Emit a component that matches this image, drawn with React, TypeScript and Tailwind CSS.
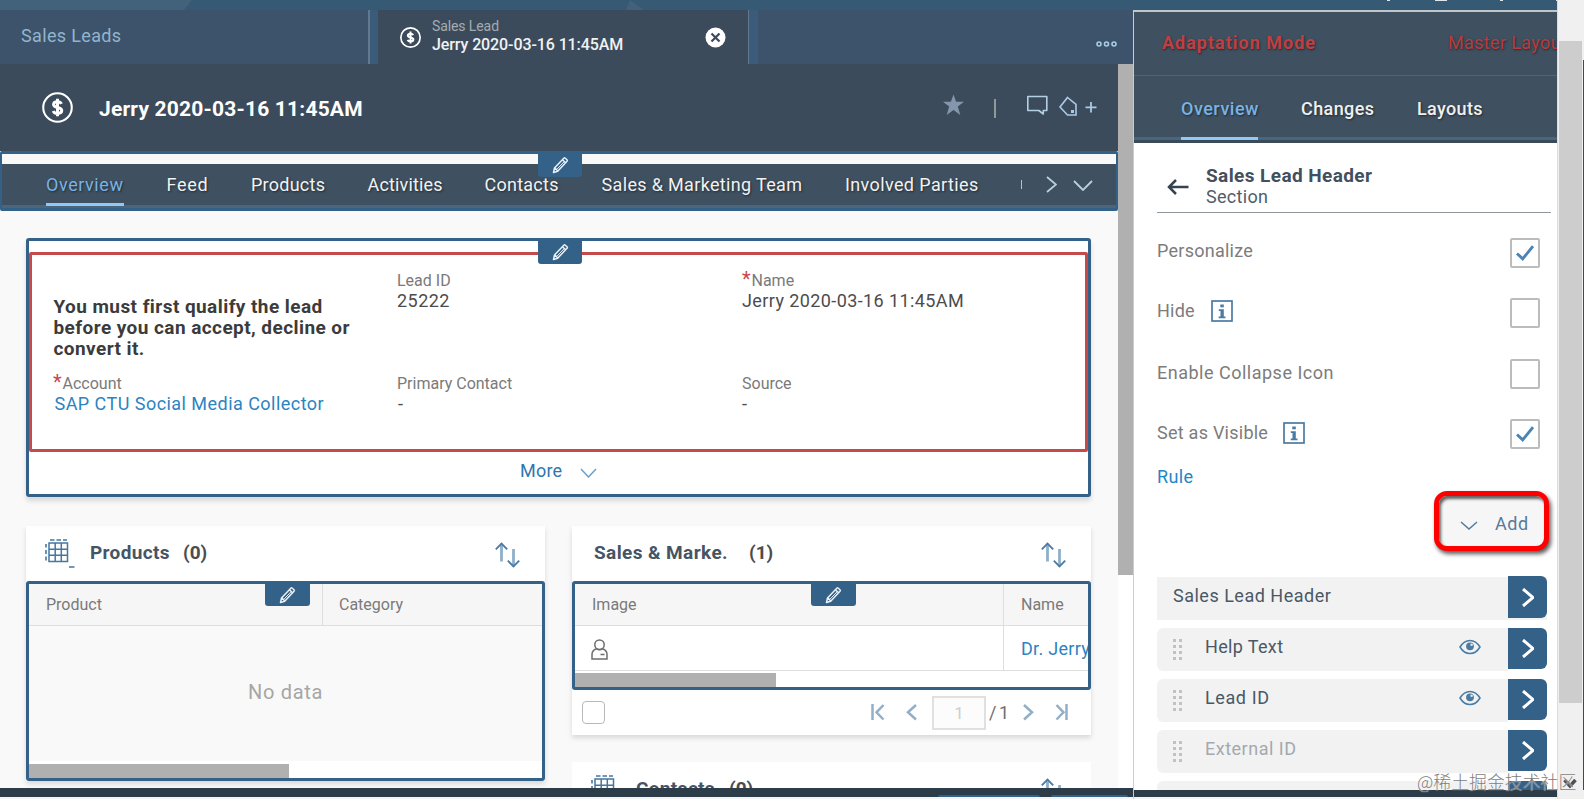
import React from 'react';

const navTabs = [
  { label: 'Overview', className: 'w-[78px] tracking-[0.57px]', active: true },
  { label: 'Feed', className: 'w-[42px] tracking-[0.7px]' },
  { label: 'Products', className: 'w-[74px] tracking-[0.25px]' },
  { label: 'Activities', className: 'w-[74.500px] tracking-[0.15px]' },
  { label: 'Contacts', className: 'w-[74.500px] tracking-[0.25px]' },
  { label: 'Sales & Marketing Team', className: 'w-[201px] tracking-[0.34px]' },
  { label: 'Involved Parties', className: 'w-[134px] tracking-[0.38px]' },
];

const panelRows = [
  { label: 'Help Text', className: 'tracking-[0.35px]', visible: true },
  { label: 'Lead ID', className: 'tracking-[0.6px]', visible: true },
  { label: 'External ID', className: 'tracking-[0.5px] text-[#a3a9af]', visible: false },
];

const DollarIcon = ({ size, stroke }: { size: number; stroke: number }) => (
  <svg width={size} height={size} viewBox="0 0 30 30" fill="none" stroke="#fff" className="shrink-0">
    <circle cx="15" cy="15" r="13.8" strokeWidth={stroke} />
    <path d="M18.8 11.6c-.7-1.5-2-2.1-3.8-2.1-2.2 0-3.8 1-3.8 2.7 0 4 7.9 1.7 7.9 5.8 0 1.800-1.700 2.800-4 2.800-2.100 0-3.600-.8-4.200-2.500M15 6.500v17" strokeWidth="2.900" />
  </svg>
);

const PencilTab = ({ className }: { className: string }) => (
  <div className={`absolute flex items-center justify-center bg-[#346187] rounded-b-[3px] ${className}`}>
    <svg width="17" height="18" viewBox="0 0 17 18" fill="none" stroke="#e8f1f8" strokeWidth="1.500" strokeLinejoin="round">
      <path d="M1.500 16.500l1-4.500L11.800 2.200c.5-.5 1-.5 1.500 0l1.700 1.600c.5.5.5 1 0 1.500L5.700 15.200zM3 12l2.700 3M10.500 3.700l3 3" />
      <path d="M5 13.200l7-7.400" strokeWidth="1" />
    </svg>
  </div>
);

const SortIcon = () => (
  <svg width="25" height="26" viewBox="0 0 25 26" fill="none" stroke="#4f7ca3" strokeWidth="1.900">
    <path d="M6.500 19.500V1.500" stroke="#8fafc9" strokeWidth="2.800" />
    <path d="M.8 7.300L6.500 1.500l5.700 5.800" />
    <path d="M18.500 7v17.500" stroke="#8fafc9" strokeWidth="2.800" />
    <path d="M12.800 18.700l5.700 5.800 5.700-5.800" />
  </svg>
);

const TableIcon = () => (
  <svg width="30" height="29" viewBox="0 0 30 29" fill="none" stroke="#4577a0" strokeWidth="1.500">
    <path d="M4 4h18.500v18.500H4zM10.200 4v18.500M16.300 4v18.500M4 10.200h18.500M4 16.300h18.500" />
    <path d="M5 1h4.500M11.500 1H16M18 1h4M1 5v3.500M1 11v4M1 17.500v4M24 28h5.500" strokeWidth="1.600" />
  </svg>
);

const Chevron = ({ dir, color, w = 18, h = 10, stroke = 1.5 }: { dir: 'down' | 'right'; color: string; w?: number; h?: number; stroke?: number }) => {
  const points = {
    down: `1,1 ${w / 2},${h - 1} ${w - 1},1`,
    right: `1,1 ${w - 1},${h / 2} 1,${h - 1}`,
  };
  return (
    <svg width={w} height={h} fill="none" stroke={color} strokeWidth={stroke} className="shrink-0">
      <polyline points={points[dir]} />
    </svg>
  );
};

const InfoIcon = () => (
  <svg width="22" height="22" viewBox="0 0 22 22" className="shrink-0">
    <rect x="1" y="1" width="20" height="20" fill="#fff" stroke="#4a7ba3" strokeWidth="1.700" />
    <rect x="9.300" y="4.500" width="3.500" height="2.800" fill="#4a7ba3" />
    <path d="M7.800 9.300h5v7.200h1.700v1.700H7.700v-1.700h1.800v-5.600H7.800z" fill="#4a7ba3" />
  </svg>
);

const Checkbox = ({ checked }: { checked?: boolean }) => (
  <div className="flex h-[30px] w-[30px] shrink-0 items-center justify-center rounded-[2px] border-2 border-[#bcbcbc] bg-white">
    {checked && (
      <svg width="18" height="16" viewBox="0 0 18 16" fill="none" stroke="#4a83b4" strokeWidth="2.900">
        <path d="M1 8.500l5.700 5.300L17 1.200" />
      </svg>
    )}
  </div>
);

const EyeIcon = () => (
  <svg width="22" height="16" viewBox="0 0 22 16" fill="none" stroke="#4a7ba3" strokeWidth="1.500">
    <path d="M1 8c2.600-4.300 6-6.600 10-6.600S18.400 3.700 21 8c-2.600 4.300-6 6.600-10 6.600S3.600 12.300 1 8z" />
    <circle cx="11" cy="7.300" r="3.900" fill="#4a7ba3" stroke="none" />
    <circle cx="12.600" cy="5.800" r="1.300" fill="#dbe6ef" stroke="none" />
  </svg>
);

const DragHandle = () => (
  <div className="grid w-[9px] grid-cols-2 gap-[3px]">
    {Array.from({ length: 8 }, (_, i) => (
      <span key={i} className="h-[3px] w-[3px] bg-[#c2c2c2]" />
    ))}
  </div>
);

const OpenButton = ({ className = 'h-[41px]' }: { className?: string }) => (
  <div className={`flex w-[39px] shrink-0 items-center justify-center rounded-r-md bg-[#346187] ${className}`}>
    <Chevron dir="right" color="#fff" w={12} h={19} stroke={3} />
  </div>
);

interface FieldProps {
  label: string;
  value: string;
  required?: boolean;
  link?: boolean;
  valueTrack?: string;
}

const Field = ({ label, value, required, link, valueTrack = '' }: FieldProps) => (
  <div className="flex flex-col whitespace-nowrap">
    <div className="flex h-[19px] text-[16px] leading-[20px] text-[#7a7a7a]">
      {required && <span className="-mt-[2px] mr-[1.500px] h-4 w-2 text-[20px] leading-[20px] text-[#c8474c]">*</span>}
      {label}
    </div>
    <div className={`mt-px h-[20px] text-[18px] leading-[20px] ${link ? 'text-[#2c83c1]' : 'text-[#4c4c4c]'} ${valueTrack}`}>{value}</div>
  </div>
);

const TopTabs = () => (
  <div className="flex h-[54px] shrink-0 bg-[#3b5b7a]">
    <div className="w-[370px] border-r-2 border-[#61788e] bg-[#3c536b] pl-[21px] pt-[15px] text-[18px] leading-[22px] tracking-[0.35px] text-[#93b4ce]">
      Sales Leads
    </div>
    <div className="ml-2 flex w-[371px] border-r border-[#61788e] bg-[#3c4b5b] pl-[22px]">
      <div className="pt-[17px]">
        <DollarIcon size={21} stroke={2.4} />
      </div>
      <div className="ml-[11px] w-[273px] whitespace-nowrap pt-[7px]">
        <div className="text-[14px] leading-[18px] tracking-[-0.1px] text-[#a4abb0]">Sales Lead</div>
        <div className="text-[16px] font-medium leading-[20px] tracking-[-0.1px] text-[#f0f2f4]">Jerry 2020-03-16 11:45AM</div>
      </div>
      <svg width="21" height="21" viewBox="0 0 21 21" className="mt-[17px]">
        <circle cx="10.500" cy="10.500" r="10" fill="#fff" />
        <path d="M6.500 6.500l8 8M14.500 6.500l-8 8" stroke="#3c4b5b" strokeWidth="2.200" />
      </svg>
    </div>
    <div className="ml-[9px] flex flex-1 justify-end bg-[#3c536b] pr-4 pt-[31px]">
      <svg width="21" height="6" fill="none" stroke="#a9cbe6" strokeWidth="1.600">
        <circle cx="3" cy="3" r="2" />
        <circle cx="10.500" cy="3" r="2" />
        <circle cx="18" cy="3" r="2" />
      </svg>
    </div>
  </div>
);

const ObjectHeader = () => (
  <div className="flex h-[87px] shrink-0 bg-[#3c4b5b] pl-[42px]">
    <div className="pt-7">
      <DollarIcon size={31} stroke={2} />
    </div>
    <h1 className="ml-[26px] w-[844px] pt-[33px] text-[21px] font-bold leading-6 tracking-[0.19px] text-white">Jerry 2020-03-16 11:45AM</h1>
    <svg width="160" height="26" viewBox="0 0 160 26" fill="none" stroke="#a9cbe6" strokeWidth="1.600" className="mt-[30px]">
      <path d="M10.500 .5l2.600 7.300h7.900l-6.200 4.700 2.500 8.500-6.800-5-6.800 5 2.500-8.500L0 7.800h7.900z" fill="#8396ab" stroke="none" />
      <path d="M52 5v19" stroke="#8f9a90" strokeWidth="2" />
      <path d="M84.800 2.500h19v14h-3.500v3.500l-4.500-3.500h-11z" stroke="#b4cfe4" strokeLinejoin="round" />
      <path d="M124.500 3.500l8.500 7v10.500h-8.500l-7.500-8z" />
      <rect x="128" y="16" width="3" height="3" fill="#a9cbe6" stroke="none" />
      <path d="M142.500 13.300h11M148 8v10.500" strokeWidth="1.800" />
    </svg>
  </div>
);

const ObjectNav = () => (
  <div className="relative flex h-[60px] shrink-0 flex-col rounded-[2px] border-x-2 border-y-3 border-[#346187] bg-[#3f5060]">
    <div className="h-[10px] bg-[#f9f9f9]" />
    <div className="flex h-[44px] justify-between border-b-3 border-[#4b667c] pl-11">
      <div className="flex gap-[42.500px]">
        {navTabs.map((tab) => (
          <div key={tab.label} className={`relative h-[41px] whitespace-nowrap pt-[10px] text-[18px] leading-[22px] [text-shadow:1px_1px_2px_#222c36] ${tab.className} ${tab.active ? 'text-[#78b3e2]' : 'text-[#f2f2f2]'}`}>
            {tab.label}
            {tab.active && <div className="absolute inset-x-0 -bottom-[1px] h-[3px] bg-[#91c8f6]" />}
          </div>
        ))}
      </div>
      <div className="flex pr-[23px]">
        <div className="mt-4 h-[9px] w-px bg-[#9fc7ea]" />
        <div className="ml-6 mt-3">
          <Chevron dir="right" color="#b9cfdf" w={11} h={17} stroke={1.8} />
        </div>
        <div className="ml-[16px] mt-4">
          <Chevron dir="down" color="#b9cfdf" w={20} h={11} stroke={1.8} />
        </div>
      </div>
    </div>
    <PencilTab className="-top-[2px] left-[536px] h-[25px] w-[44px]" />
  </div>
);

const LeadSection = () => (
  <div className="relative h-[259px] shrink-0 rounded-[3px] border-3 border-[#346187] bg-white pt-[11px] shadow-[0_4px_5px_rgba(0,0,0,0.13)]">
    <div className="grid h-[200px] grid-cols-[344px_345px_1fr] grid-rows-[103px_1fr] rounded-[2px] border-3 border-[#c44a4b] pl-[21px] pt-[16px]">
      <p className="whitespace-nowrap pl-[0.500px] pt-[25px] text-[19px] font-bold leading-[21px] tracking-[0.43px] text-[#3b3b3b]">
        You must first qualify the lead
        <br />
        before you can accept, decline or
        <br />
        convert it.
      </p>
      <Field label="Lead ID" value="25222" valueTrack="tracking-[0.45px]" />
      <Field label="Name" value="Jerry 2020-03-16 11:45AM" required valueTrack="tracking-[0.4px]" />
      <Field label="Account" value="SAP CTU Social Media Collector" required link valueTrack="pl-[1.500px] tracking-[0.46px]" />
      <Field label="Primary Contact" value="-" valueTrack="pl-px" />
      <Field label="Source" value="-" />
    </div>
    <div className="flex pl-[491px] pt-[8px] text-[18px] leading-[22px] tracking-[0.2px] text-[#2f77ad]">
      More
      <div className="ml-[18px] mt-[8px]">
        <Chevron dir="down" color="#6b9fc8" w={17} h={10} />
      </div>
    </div>
    <PencilTab className="-top-[1px] left-[509px] h-[24px] w-[44px]" />
  </div>
);

const ProductsCard = () => (
  <div className="h-[255px] w-[519px] bg-white shadow-[0_3px_5px_rgba(0,0,0,0.13)]">
    <div className="flex h-[55px] pl-[19px] text-[19px] font-bold leading-6 text-[#465463]">
      <div className="pt-[13px]">
        <TableIcon />
      </div>
      <div className="ml-[15px] w-[93px] pt-[15px] tracking-[0.35px]">Products</div>
      <div className="w-[312px] pt-[15px] text-[#4c4c4c]">(0)</div>
      <div className="pt-4">
        <SortIcon />
      </div>
    </div>
    <div className="relative flex h-[200px] flex-col rounded-[3px] border-3 border-[#346187] bg-[#f9f9f9]">
      <div className="flex h-[42px] border-b border-[#dedede] bg-[#f6f6f6] text-[16px] leading-5 text-[#7a7a7a]">
        <div className="w-[294px] border-r border-[#dedede] pl-[17px] pt-[11px]">Product</div>
        <div className="pl-4 pt-[11px]">Category</div>
      </div>
      <div className="flex h-[135px] items-center justify-center pb-1 text-[20px] tracking-[0.7px] text-[#a6a6a6]">No data</div>
      <div className="flex flex-1 items-end bg-white">
        <div className="h-[14px] w-[260px] bg-[#b0b0b0]" />
      </div>
      <PencilTab className="-top-[1px] left-[236px] h-[23px] w-[45px]" />
    </div>
  </div>
);

const TeamCard = () => (
  <div className="h-[209px] w-[519px] bg-white shadow-[0_3px_5px_rgba(0,0,0,0.13)]">
    <div className="flex h-[55px] pl-[22px] text-[19px] font-bold leading-6 text-[#465463]">
      <div className="w-[155px] whitespace-nowrap pt-[15px] tracking-[0.4px]">Sales &amp; Marke.</div>
      <div className="w-[292px] pt-[15px] text-[#4c4c4c]">(1)</div>
      <div className="pt-4">
        <SortIcon />
      </div>
    </div>
    <div className="relative flex h-[109px] flex-col rounded-[3px] border-3 border-[#346187] bg-white">
      <div className="flex h-[42px] border-b border-[#dedede] bg-[#f6f6f6] text-[16px] leading-5 text-[#7a7a7a]">
        <div className="w-[429px] border-r border-[#dedede] pl-[17px] pt-[11px]">Image</div>
        <div className="pl-[17px] pt-[11px]">Name</div>
      </div>
      <div className="flex h-[45px] border-b border-[#dedede]">
        <div className="w-[429px] border-r border-[#dedede] pl-[16px] pt-[13px]">
          <svg width="17" height="21" viewBox="0 0 17 21" fill="none" stroke="#6d6d6d" strokeWidth="1.500">
            <circle cx="8.500" cy="5.700" r="4.700" />
            <path d="M1 20v-4.500c0-3 1.500-4.700 4.500-5.700 2 1.200 4 1.200 6 0 3 1 4.500 2.700 4.500 5.700V20zM9.500 15.500h4" />
          </svg>
        </div>
        <div className="flex-1 overflow-hidden whitespace-nowrap pl-[17px] pt-[12px] text-[18px] leading-[22px] tracking-[0.3px] text-[#2c83c1]">Dr. Jerry</div>
      </div>
      <div className="flex flex-1 items-end">
        <div className="h-[14px] w-[201px] bg-[#b0b0b0]" />
      </div>
      <PencilTab className="-top-[1px] left-[236px] h-[23px] w-[45px]" />
    </div>
    <div className="flex h-[45px] items-center pl-[10px]">
      <div className="h-[23px] w-[23px] rounded-[4px] border-[1.500px] border-[#b9b9b9] bg-white" />
      <svg width="46" height="17" viewBox="0 0 46 17" fill="none" stroke="#93afc8" strokeWidth="2.500" className="ml-[266px]">
        <path d="M1.500 0v16M12.500 1L5.500 8.300l7 7.200M45 1l-8 7.300 8 7.200" />
      </svg>
      <div className="ml-[15px] flex h-[34px] w-[54px] items-center justify-center border-2 border-[#e0e0e0] bg-[#fcfcfc] pt-0.5 text-[17px] text-[#cfcfcf]">1</div>
      <div className="ml-[3px] w-[19px] whitespace-nowrap text-[18px] tracking-[-0.9px] text-[#6e6e6e]">/ 1</div>
      <svg width="46" height="17" viewBox="0 0 46 17" fill="none" stroke="#93afc8" strokeWidth="2.500" className="ml-[15px]">
        <path d="M1 1l8 7.300-8 7.200M33.500 1l7 7.300-7 7.200M43.500 0v16" />
      </svg>
    </div>
  </div>
);

const ContactsCard = () => (
  <div className="flex h-[55px] w-[519px] bg-white pl-[19px] text-[19px] font-bold leading-6 text-[#465463]">
    <div className="pt-[13px]">
      <TableIcon />
    </div>
    <div className="ml-[15px] w-[93px] pt-[15px] tracking-[0.3px]">Contacts</div>
    <div className="w-[312px] pt-[15px] text-[#4c4c4c]">(0)</div>
    <div className="pt-4">
      <SortIcon />
    </div>
  </div>
);

const AdaptationPanel = () => (
  <div className="flex w-[424px] shrink-0 flex-col overflow-hidden border-l border-[#c9cccf] bg-white">
    <div className="flex h-[65px] shrink-0 overflow-hidden whitespace-nowrap border-t-2 border-[#bfc5c9] bg-[#3f5060] pl-[28px] pt-[20px] text-[18px] leading-[22px]">
      <div className="w-[286px] shrink-0 font-bold tracking-[1px] text-[#c13f41] [text-shadow:1px_1px_2px_#222c36]">Adaptation Mode</div>
      <div className="tracking-[0.35px] text-[#b83c3e] [text-shadow:1px_1px_2px_#222c36]">Master Layout</div>
    </div>
    <div className="flex h-[68px] shrink-0 flex-col border-b-3 border-[#3b4a59] bg-[#3f5060]">
      <div className="flex h-[65px] border-b-3 border-t border-[#4b667c] pl-[47px] text-[18px] font-medium leading-[22px] text-[#f0f0f0] [text-shadow:1px_1px_2px_#222c36]">
        <div className="relative w-[77px] pt-[22px] tracking-[0.5px] text-[#78b3e2]">
          Overview
          <div className="absolute inset-x-0 -bottom-[3px] h-[3px] bg-[#91c8f6]" />
        </div>
        <div className="ml-[43px] w-[73px] pt-[22px] tracking-[0.4px]">Changes</div>
        <div className="ml-[43px] pt-[22px] tracking-[0.35px]">Layouts</div>
      </div>
    </div>

    <div className="flex flex-1 flex-col overflow-hidden pl-[23px]">
      <div className="flex h-[70px] w-[394px] shrink-0 border-b border-[#8f989f] pl-[10px] pt-[22px] text-[18px] leading-[21px]">
        <svg width="22" height="16" viewBox="0 0 22 16" fill="none" stroke="#36434f" strokeWidth="2.500" className="mt-[14px]">
          <path d="M21.500 8H2M9 1L2 8l7 7" />
        </svg>
        <div className="ml-[17px] text-[#4f5d6b]">
          <div className="text-[19px] font-bold tracking-[0.4px] text-[#414f5e]">Sales Lead Header</div>
          <div className="tracking-[0.3px]">Section</div>
        </div>
      </div>

      <div className="flex w-[383px] shrink-0 flex-col text-[18px] leading-[22px] text-[#7c7c7c]">
        <div className="mt-[25px] flex h-[30px] justify-between">
          <span className="pt-[2px] tracking-[0.25px]">Personalize</span>
          <Checkbox checked />
        </div>
        <div className="mt-[30px] flex h-[30px] justify-between">
          <div className="flex gap-4 pt-[2px] tracking-[0.25px]">
            Hide
            <InfoIcon />
          </div>
          <Checkbox />
        </div>
        <div className="mt-[31px] flex h-[30px] justify-between">
          <span className="pt-[3px] tracking-[0.5px]">Enable Collapse Icon</span>
          <Checkbox />
        </div>
        <div className="mt-[30px] flex h-[30px] justify-between">
          <div className="flex gap-[15px] pt-[3px] tracking-[0.25px]">
            Set as Visible
            <InfoIcon />
          </div>
          <Checkbox checked />
        </div>
        <div className="mt-[17px] tracking-[0.4px] text-[#2287c6]">Rule</div>
      </div>

      <div className="ml-[277px] mt-[3px] flex h-[60px] w-[115px] shrink-0 items-center rounded-[13px] border-5 border-[#ff0000] bg-[#f6f6f6] pl-[21px] text-[18px] text-[#557a9c] shadow-[2px_3px_4px_rgba(0,0,0,0.65),inset_2px_3px_3px_rgba(0,0,0,0.6)]">
        <div className="mt-2">
          <Chevron dir="down" color="#557a9c" w={18} h={9} />
        </div>
        <span className="ml-[17px] mt-[4px] tracking-[0.5px]">Add</span>
      </div>

      <div className="mt-[26px] flex shrink-0 flex-col gap-[8px] text-[18px] leading-[22px] text-[#4a5866]">
        <div className="flex h-[43px] w-[390px] bg-[#f2f2f2]">
          <div className="flex-1 pl-4 pt-[8px] tracking-[0.5px]">Sales Lead Header</div>
          <OpenButton className="-mt-px h-[42px]" />
        </div>
        {panelRows.map((row) => (
          <div key={row.label} className="flex h-[43px] w-[390px] rounded-l-md bg-linear-to-r from-[#f2f2f2] from-90% to-white to-90%">
            <div className="w-[48px] pl-4 pt-[11px]">
              <DragHandle />
            </div>
            <div className={`flex-1 pt-[8px] ${row.className}`}>{row.label}</div>
            {row.visible && (
              <div className="mr-[27px] pt-[11px]">
                <EyeIcon />
              </div>
            )}
            <OpenButton />
          </div>
        ))}
        <div className="flex h-[43px] w-[390px] rounded-l-md bg-[#f2f2f2]">
          <div className="flex-1" />
          <OpenButton />
        </div>
      </div>
    </div>
    <div className="h-[7px] shrink-0 bg-[#2d3c49]" />
    <div className="h-[2px] shrink-0 bg-[#f4f4f4]" />
  </div>
);

export default function App() {
  return (
    <div className="relative flex h-[799px] w-[1584px] overflow-hidden bg-white font-['Roboto','Noto_Sans',sans-serif]">
      <div className="flex w-[1557px] shrink-0 flex-col">
        <svg width="1557" height="10" className="shrink-0 bg-[#365974]">
          <path d="M0 0h192l-8 10H0z" fill="#42627b" />
          <path d="M630 0l-4 10h18z" fill="#42627b" />
          <path d="M1387 0h3v1h-3zM1435 0h12v1h-12zM1500 0h3v1h-3zM1556 0h1v1h-1z" fill="#dfe7ec" />
        </svg>
        <div className="flex h-[789px]">
          <div className="flex w-[1133px] shrink-0 flex-col">
            <TopTabs />
            <div className="flex h-[724px] shrink-0 overflow-hidden">
              <div className="flex w-[1118px] shrink-0 flex-col overflow-hidden bg-[#f9f9f9]">
                <ObjectHeader />
                <ObjectNav />
                <div className="flex shrink-0 flex-col gap-[29px] pl-[26px] pr-[27px] pt-[27px]">
                  <LeadSection />
                  <div className="flex items-start gap-[27px]">
                    <ProductsCard />
                    <div className="flex flex-col gap-[27px]">
                      <TeamCard />
                      <ContactsCard />
                    </div>
                  </div>
                </div>
              </div>
              <div className="w-[15px] bg-white">
                <div className="h-[511px] bg-[#b0b0b0]" />
              </div>
            </div>
            <div className="flex h-[9px] items-end gap-[11px] bg-[#2d3c49] pl-[938px]">
              <div className="h-[2px] w-[102px] rounded-t bg-[#346187]" />
              <div className="h-[2px] w-[77px] rounded-t bg-[#346187]" />
            </div>
            <div className="h-[2px] bg-[#f4f4f4]" />
          </div>
          <AdaptationPanel />
        </div>
      </div>

      <div className="flex flex-1 flex-col border-l border-[#dcdcdc] bg-[#f0f0f0] pl-px pt-[41px]">
        <div className="h-[662px] w-[23px] bg-[#cdcdcd]" />
        <svg width="23" height="96" fill="none" stroke="#505050" strokeWidth="3.500">
          <path d="M5.500 77l5.500 6 5.500-6" />
        </svg>
      </div>
      <div className="w-[2px] bg-[#f0f0f0] pt-[60px]">
        <div className="ml-px h-[730px] w-px bg-[#3e4a56]" />
      </div>

      <div className="absolute left-[1417px] top-[768px] whitespace-nowrap text-[17.900px] font-light leading-[26px] text-[#7d7d7d] [font-family:'Noto_Sans_CJK_SC',sans-serif] [text-shadow:0_0_1px_#fff]">
        @稀土掘金技术社区
      </div>
    </div>
  );
}
